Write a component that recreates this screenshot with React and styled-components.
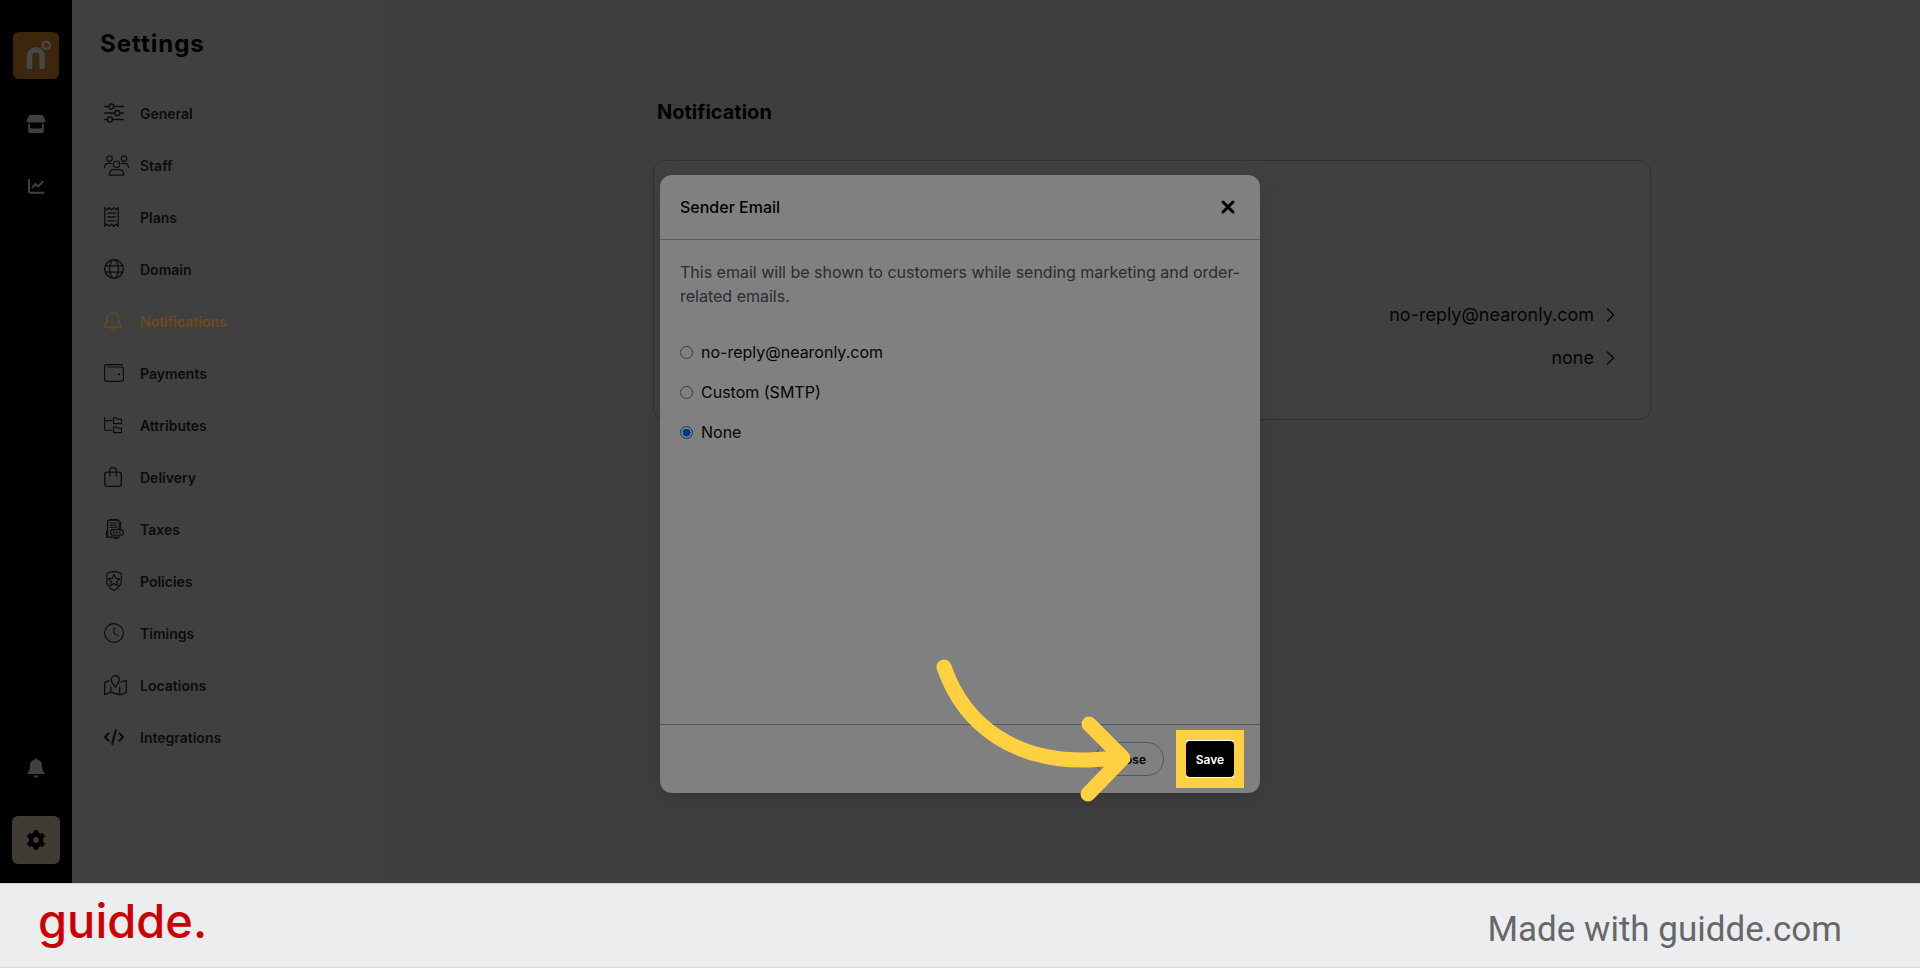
import { useState } from "react";

import styled, { createGlobalStyle } from "styled-components";

const GlobalStyle = createGlobalStyle`
  * {
    box-sizing: border-box;
  }
  body {
    margin: 0;
    background: #ecedef;
    font-family: Inter, "Liberation Sans", sans-serif;
    color: #000;
  }
  h1, h2, h3, p, ul {
    margin: 0;
    padding: 0;
  }
  button {
    font-family: inherit;
    border: none;
    background: none;
    padding: 0;
    cursor: pointer;
  }
`;

const Page = styled.div`
  min-height: 100vh;
  display: flex;
  flex-direction: column;
`;

const Stage = styled.div`
  position: relative;
  flex: 1;
  display: flex;
  background: #3e3e3e;
`;

/* left rail */
const Rail = styled.nav`
  width: 72px;
  flex-shrink: 0;
  padding: 32px 0 19px;
  background: #000;
  display: flex;
  flex-direction: column;
  align-items: center;
`;

const RailLogo = styled.a`
  width: 46px;
  height: 47px;
  border-radius: 6px;
  background: #3d270c;
  margin-bottom: 14px;
`;

const RailButton = styled.button`
  width: 48px;
  height: 48px;
  margin-top: ${(p) => (p.$gap ? p.$gap + "px" : "0")};
  display: flex;
  align-items: center;
  justify-content: center;
  border-radius: 6px;
  background: ${(p) => (p.$active ? "#403c33" : "transparent")};
  color: ${(p) => (p.$active ? "#000" : "#404040")};
`;

const Spacer = styled.div`
  flex: 1;
`;

/* settings menu */
const Sidebar = styled.aside`
  width: 312px;
  flex-shrink: 0;
  background: #404040;
  padding: 28px 28px 0;
`;

const SidebarTitle = styled.h1`
  font-size: 24px;
  line-height: 32px;
  font-weight: 700;
  letter-spacing: 1px;
`;

const Menu = styled.ul`
  list-style: none;
  margin-top: 27px;
  padding-left: 4px;
`;

const MenuLink = styled.a`
  height: 52px;
  display: flex;
  align-items: center;
  color: ${(p) => (p.$active ? "#6e4a1c" : "#0b0c0e")};
  font-size: 14px;
  font-weight: 600;
  text-decoration: none;
`;

const MenuIcon = styled.span`
  width: 36px;
  display: flex;
  align-items: center;
  padding-left: ${(p) => (p.$inset ? "2px" : "0")};
`;

/* page content */
const Main = styled.main`
  flex: 1;
  padding: 96px 32px 0;
`;

const Content = styled.div`
  max-width: 998px;
  margin: 0 auto;
`;

const ContentTitle = styled.h2`
  padding-left: 4px;
  font-size: 20px;
  line-height: 32px;
  font-weight: 700;
`;

const Card = styled.section`
  margin-top: 32px;
  min-height: 260px;
  padding: 132px 35px 0;
  border: 1px solid #2f3033;
  border-radius: 12px;
  background: #404040;
  display: flex;
  flex-direction: column;
  align-items: flex-end;
`;

const CardRow = styled.button`
  height: 43px;
  display: flex;
  align-items: center;
  gap: 12px;
  font-size: 18px;
  color: #050505;
`;

/* dialog */
const Overlay = styled.div`
  position: absolute;
  inset: 0;
  padding-top: 175px;
  display: flex;
  justify-content: center;
  align-items: flex-start;
`;

const DialogFrame = styled.div`
  position: relative;
`;

const Dialog = styled.div`
  width: 600px;
  border-radius: 12px;
  background: #808080;
  box-shadow: 0 8px 24px rgba(0, 0, 0, 0.12);
`;

const DialogHeader = styled.header`
  height: 65px;
  padding: 0 24px 0 20px;
  border-bottom: 1px solid #5b5c5e;
  display: flex;
  align-items: center;
  justify-content: space-between;
`;

const DialogTitle = styled.h3`
  font-size: 16px;
  font-weight: 500;
`;

const CloseIcon = styled.button`
  display: flex;
  color: #000;
`;

const DialogBody = styled.div`
  height: 484px;
  padding: 20px 12px 0 20px;
`;

const Hint = styled.p`
  font-size: 16px;
  line-height: 24px;
  color: #282c34;
`;

const Options = styled.div`
  margin-top: 24px;
`;

const Option = styled.label`
  height: 40px;
  display: flex;
  align-items: center;
  gap: 8px;
  font-size: 16px;
  color: #050505;
`;

const Radio = styled.input`
  appearance: none;
  width: 13px;
  height: 13px;
  margin: 0;
  border: 1px solid #3b3b3b;
  border-radius: 50%;
  background: #808080;

  &:checked {
    border-color: #003b80;
    background: radial-gradient(circle, #003b80 0 4px, #808080 4px);
  }
`;

const DialogFooter = styled.footer`
  height: 69px;
  padding-right: 16px;
  border-top: 1px solid #54585f;
  display: flex;
  align-items: center;
  justify-content: flex-end;
  gap: 12px;
`;

const CloseButton = styled.button`
  height: 34px;
  padding: 0 17px;
  border: 1px solid #54585f;
  border-radius: 17px;
  font-size: 12px;
  font-weight: 600;
  color: #000;
`;

const Highlight = styled.div`
  border: 10px solid #ffd141;
  background: #fff;
  padding: 1px 0;
  display: flex;
`;

const SaveButton = styled.button`
  width: 48px;
  height: 36px;
  border-radius: 4px;
  background: #000;
  color: #fff;
  font-size: 12px;
  font-weight: 600;
`;

const ArrowMark = styled.svg`
  position: absolute;
  right: 128px;
  bottom: -10px;
  pointer-events: none;
`;

/* bottom strip */
const Footer = styled.footer`
  height: 85px;
  padding: 0 78px 0 38px;
  border-top: 1px solid #d3d4d5;
  border-bottom: 1px solid #d8dadc;
  background: #ecedef;
  display: flex;
  align-items: center;
  justify-content: space-between;
`;

const Brand = styled.a`
  padding-bottom: 10px;
  font-size: 47px;
  line-height: 60px;
  font-weight: 500;
  color: #c00;
  text-decoration: none;
`;

const MadeWith = styled.p`
  padding-top: 8px;
  font-family: Roboto, sans-serif;
  font-size: 35px;
  color: #666769;
`;

function Icon({ w, h, stroke = 1.1, children }) {
  return (
    <svg
      width={w}
      height={h}
      viewBox={`0 0 ${w} ${h}`}
      fill="none"
      stroke="currentColor"
      strokeWidth={stroke}
      strokeLinecap="round"
      strokeLinejoin="round"
      aria-hidden="true"
    >
      {children}
    </svg>
  );
}

const SlidersIcon = () => (
  <Icon w={20} h={20} stroke={1.3}>
    <path d="M.7 3.5h4.1M9.8 3.5h9.5M.7 10h10.1M15.8 10h3.5M.7 16.5h2.8M8.5 16.5h10.8" />
    <circle cx="7.3" cy="3.5" r="2.5" />
    <circle cx="13.3" cy="10" r="2.5" />
    <circle cx="6" cy="16.5" r="2.5" />
  </Icon>
);

const StaffIcon = () => (
  <Icon w={25} h={21} stroke={1.2}>
    <circle cx="5.5" cy="3.6" r="2.8" />
    <circle cx="20" cy="3.6" r="2.8" />
    <circle cx="12.5" cy="9.2" r="3.2" />
    <path d="M5.5 20.2v-1c0-3.4 2-4.6 4.8-4.6h4.6c2.8 0 4.8 1.2 4.8 4.6v1z" />
    <path d="M.6 12.6C.6 9.6 2 8.4 4.4 8.4h2.8M24.4 12.6c0-3-1.4-4.2-3.8-4.2h-2.8" />
  </Icon>
);

const ReceiptIcon = () => (
  <Icon w={15} h={20} stroke={1.3}>
    <path d="M.8.8v18.4l2.2-2 2.2 2 2.3-2 2.3 2 2.2-2 2.2 2V.8L12 2.8 9.8.8 7.5 2.8 5.2.8 3 2.8z" />
    <path d="M3.8 6.2h7.4M3.8 10h7.4M3.8 13.8h7.4" />
  </Icon>
);

const GlobeIcon = () => (
  <Icon w={20} h={20} stroke={1.3}>
    <circle cx="10" cy="10" r="9.3" />
    <ellipse cx="10" cy="10" rx="4.4" ry="9.3" />
    <path d="M1.4 6.8h17.2M1.4 13.2h17.2" />
  </Icon>
);

const BellIcon = () => (
  <Icon w={18} h={20} stroke={1.3}>
    <path d="M8.7.6v1M2.9 7.2C2.9 3.8 5.4 1.6 8.7 1.6s5.8 2.2 5.8 5.6c0 4.5 1 6 2.2 7.3.6.7.2 1.5-.8 1.5H1.5c-1 0-1.4-.8-.8-1.5C1.9 13.2 2.9 11.7 2.9 7.2z" />
    <path d="M7 18.3c.8 1.2 2.6 1.2 3.4 0" />
  </Icon>
);

const WalletIcon = () => (
  <Icon w={20} h={18} stroke={1.2}>
    <path d="M18.3.6H2.8C1.4.6.6 1.5.6 2.9v12.2c0 1.5.9 2.3 2.3 2.3h14.2c1.5 0 2.3-.8 2.3-2.3V5.3c0-1.5-.8-2.3-2.3-2.3H4" />
    <circle cx="15" cy="10.3" r=".5" fill="currentColor" />
  </Icon>
);

const TreeIcon = () => (
  <Icon w={18} h={17}>
    <path d="M.6.6v11.7c0 .6.3.9.9.9h6M.6 3.6h7" />
    <path d="M9.5.8h2.6l1.2 1.4h4.2v4.4h-8zM9.5 9.8h2.6l1.2 1.4h4.2v4.4h-8z" />
  </Icon>
);

const BagIcon = () => (
  <Icon w={18} h={20} stroke={1.3}>
    <path d="M3 5.2h12c1.6 0 2.4.8 2.4 2.3l-.2 9c0 2-1 2.9-2.9 2.9H3.7c-1.9 0-2.9-.9-2.9-2.9l-.2-9C.6 6 1.4 5.2 3 5.2z" />
    <path d="M5.7 9V4c0-2.2 1.2-3.4 3.3-3.4S12.3 1.8 12.3 4v5" />
  </Icon>
);

const TaxIcon = () => (
  <Icon w={18} h={20}>
    <path d="M13.2 10V2.5c0-.9-.5-1.4-1.4-1.4H3c-.9 0-1.4.5-1.4 1.4v14.2c0 .9.5 1.4 1.4 1.4h8.8c.9 0 1.4-.4 1.4-1.2" />
    <path d="M4 .6h7M14.6 3v6.5M.5 12v5.5c0 .5.3.9.8.9M8 19.5h4" />
    <path d="M4 4h7M4 6.2h7M4 8.4h7" strokeWidth="1" />
    <rect x="4.5" y="10.6" width="12.9" height="5.6" rx="2.8" />
    <path d="M7 13.4h8" strokeWidth="2" strokeDasharray="1.6 1.4" strokeLinecap="butt" />
  </Icon>
);

const ShieldIcon = () => (
  <Icon w={16} h={20}>
    <path d="M8 .6C5.500.6 3.200 1.200.7 2.400v7.400c0 4.600 3.100 7.500 7.300 9.700 4.200-2.200 7.300-5.100 7.300-9.700V2.400C12.800 1.200 10.500.6 8 .6z" />
    <path d="M8 3.200l1.700 4.200 4.400.3-3.400 2.800 1.100 4.300L8 12.500l-3.800 2.300 1.100-4.300-3.400-2.800 4.400-.3z" />
  </Icon>
);

const ClockIcon = () => (
  <Icon w={20} h={20}>
    <circle cx="10" cy="10" r="9.4" />
    <path d="M10 4.8v5.4l4 2.4" />
  </Icon>
);

const MapIcon = () => (
  <Icon w={23} h={21} stroke={1.3}>
    <path d="M4.7 5.8L.7 7.6v12l6.2-2.5 9 2.8 6.4-2.4V5.4l-4.8 1.6M6.900 12v5M15.700 12.500v7" />
    <path d="M11.3 12C9 9 7.3 7 7.3 4.7c0-2.500 1.800-4 4-4s4 1.500 4 4c0 2.300-1.700 4.300-4 7.300z" />
  </Icon>
);

const CodeIcon = () => (
  <Icon w={20} h={16} stroke={2}>
    <path d="M4.6 4.3L1 8l3.6 3.7M15.4 4.3L19 8l-3.6 3.7M11.9 1L8.1 15" />
  </Icon>
);

const MENU = [
  { label: "General", icon: SlidersIcon },
  { label: "Staff", icon: StaffIcon },
  { label: "Plans", icon: ReceiptIcon },
  { label: "Domain", icon: GlobeIcon },
  { label: "Notifications", icon: BellIcon, active: true },
  { label: "Payments", icon: WalletIcon },
  { label: "Attributes", icon: TreeIcon },
  { label: "Delivery", icon: BagIcon },
  { label: "Taxes", icon: TaxIcon, inset: true },
  { label: "Policies", icon: ShieldIcon, inset: true },
  { label: "Timings", icon: ClockIcon },
  { label: "Locations", icon: MapIcon },
  { label: "Integrations", icon: CodeIcon },
];

const SENDERS = ["no-reply@nearonly.com", "Custom (SMTP)", "None"];

function NavRail() {
  return (
    <Rail>
      <RailLogo href="#home" aria-label="Home">
        <svg width="46" height="47" viewBox="0 0 46 47" fill="none" stroke="#464646">
          <path d="M16.5 37V24a6.3 6.3 0 0 1 12.6 0V37" strokeWidth="5.4" />
          <circle cx="33.3" cy="13.3" r="3.6" strokeWidth="2.4" />
        </svg>
      </RailLogo>
      <RailButton aria-label="Store" $gap={7}>
        <svg width="20" height="20" viewBox="0 0 20 20" fill="currentColor">
          <path d="M3.6 1h12.8l2.7 4.6c.7 1.700-.1 3-1.600 3H2.500C1 8.600.2 7.300.9 5.600z" />
          <path d="M2.2 9.5h1.9v5h11.8v-5h1.9v7.7c0 1.100-.7 1.800-1.800 1.800H4c-1.100 0-1.800-.7-1.800-1.800z" />
        </svg>
      </RailButton>
      <RailButton aria-label="Analytics" $gap={14}>
        <Icon w={18} h={18} stroke={2}>
          <path d="M2 3v11c0 1.1.6 1.7 1.7 1.7H16.5M5.3 10.5L8.6 7l2.6 2.5 4.5-4.8" />
        </Icon>
      </RailButton>
      <Spacer />
      <RailButton aria-label="Alerts">
        <svg width="20" height="20" viewBox="0 0 20 20" fill="currentColor">
          <path d="M10 .5c.7 0 1 .5 1.1 1.1 3 .5 4.9 2.7 4.9 6 0 4 .7 5.7 2.6 7.4v1H1.4v-1C3.3 13.3 4 11.600 4 7.600c0-3.300 1.900-5.500 4.900-6C9 1 9.300.5 10 .5zM7.600 17.500h4.800c-.3 1.400-1.200 2-2.400 2s-2.100-.6-2.400-2z" />
        </svg>
      </RailButton>
      <RailButton aria-label="Settings" $active $gap={24}>
        <svg
          width="20"
          height="20"
          viewBox="0 0 20 20"
          fill="currentColor"
          fillRule="evenodd"
          stroke="currentColor"
          strokeLinejoin="round"
        >
          <path d="M8.3.6h3.4l.7 2.7 1.8 1 2.7-.8 1.7 3-2 2v3l2 2-1.7 3-2.7-.8-1.8 1-.7 2.700H8.300l-.7-2.700-1.800-1-2.700.8-1.700-3 2-2v-3l-2-2 1.700-3 2.700.8 1.800-1zM10 6.500a3.500 3.500 0 1 0 0 7 3.500 3.500 0 0 0 0-7z" />
        </svg>
      </RailButton>
    </Rail>
  );
}

function SenderDialog() {
  const [sender, setSender] = useState("None");

  return (
    <Overlay>
      <DialogFrame>
        <Dialog role="dialog" aria-labelledby="sender-title">
          <DialogHeader>
            <DialogTitle id="sender-title">Sender Email</DialogTitle>
            <CloseIcon aria-label="Close dialog">
              <Icon w={16} h={16} stroke={3}>
                <path d="M3 3l10 10M13 3L3 13" />
              </Icon>
            </CloseIcon>
          </DialogHeader>
          <DialogBody>
            <Hint>
              This email will be shown to customers while sending marketing and order-related emails.
            </Hint>
            <Options>
              {SENDERS.map((name) => (
                <Option key={name}>
                  <Radio
                    type="radio"
                    name="sender"
                    checked={sender === name}
                    onChange={() => setSender(name)}
                  />
                  {name}
                </Option>
              ))}
            </Options>
          </DialogBody>
          <DialogFooter>
            <CloseButton>Close</CloseButton>
            <Highlight>
              <SaveButton>Save</SaveButton>
            </Highlight>
          </DialogFooter>
        </Dialog>
        <ArrowMark width="200" height="150" viewBox="0 0 200 150" fill="none" aria-hidden="true">
          <path
            d="M12 14C33 75 86 109 156 107L190 105M157 71L191 105L156 141"
            stroke="#ffd141"
            strokeWidth="15"
            strokeLinecap="round"
            strokeLinejoin="round"
          />
        </ArrowMark>
      </DialogFrame>
    </Overlay>
  );
}

function App() {
  return (
    <Page>
      <GlobalStyle />
      <Stage>
        <NavRail />
        <Sidebar>
          <SidebarTitle>Settings</SidebarTitle>
          <Menu>
            {MENU.map(({ label, icon: ItemIcon, active, inset }) => (
              <li key={label}>
                <MenuLink href={"#" + label.toLowerCase()} $active={active}>
                  <MenuIcon $inset={inset}>
                    <ItemIcon />
                  </MenuIcon>
                  {label}
                </MenuLink>
              </li>
            ))}
          </Menu>
        </Sidebar>
        <Main>
          <Content>
            <ContentTitle>Notification</ContentTitle>
            <Card>
              {["no-reply@nearonly.com", "none"].map((value) => (
                <CardRow key={value}>
                  {value}
                  <Icon w={9} h={16} stroke={1.2}>
                    <path d="M1.5 2l6 6-6 6" />
                  </Icon>
                </CardRow>
              ))}
            </Card>
          </Content>
        </Main>
        <SenderDialog />
      </Stage>
      <Footer>
        <Brand href="#guidde">guidde.</Brand>
        <MadeWith>Made with guidde.com</MadeWith>
      </Footer>
    </Page>
  );
}

export default App;
